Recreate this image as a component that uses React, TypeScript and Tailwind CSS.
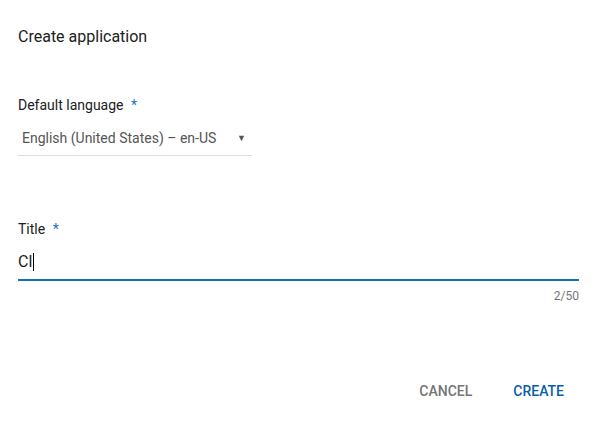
export default function App() {
  return (
    <div className="h-[430px] w-[597px] bg-white font-['Roboto',sans-serif]">
      <div className="px-[18px] pt-[27px]">
        <h1 className="text-[16px] leading-[20px] text-[#212121]">Create application</h1>

        <div className="mt-[49px] w-[234px]">
          <label className="block text-[14px] leading-[18px] text-[#212121]">
            Default language <span className="ml-1 text-[#1a73c8]">*</span>
          </label>
          <div className="mt-[15px] flex items-center justify-between border-b border-[#dddddd] pb-[8px] pl-[4px] pr-[6px]">
            <span className="text-[14px] leading-[18px] text-[#555555]">English (United States) – en-US</span>
            <span className="text-[9px] leading-[18px] text-[#555555]">▼</span>
          </div>
        </div>

        <div className="mt-[64px]">
          <label className="block text-[14px] leading-[18px] text-[#212121]">
            Title <span className="ml-1 text-[#1a73c8]">*</span>
          </label>
          <div className="mt-[14px] flex items-center border-b-2 border-[#0a74bc] pb-[7px]">
            <span className="text-[16px] leading-[20px] text-[#212121]">Cl</span>
            <span className="ml-[1px] h-[18px] w-px bg-black" />
          </div>
          <div className="mt-[8px] text-right text-[12px] leading-[14px] text-[#757575]">2/50</div>
        </div>

        <div className="mt-[79px] flex justify-end gap-[41px] pr-[15px]">
          <button className="text-[14px] font-medium uppercase leading-[18px] text-[#757575]">Cancel</button>
          <button className="text-[14px] font-medium uppercase leading-[18px] text-[#0a5ea8]">Create</button>
        </div>
      </div>
    </div>
  );
}
